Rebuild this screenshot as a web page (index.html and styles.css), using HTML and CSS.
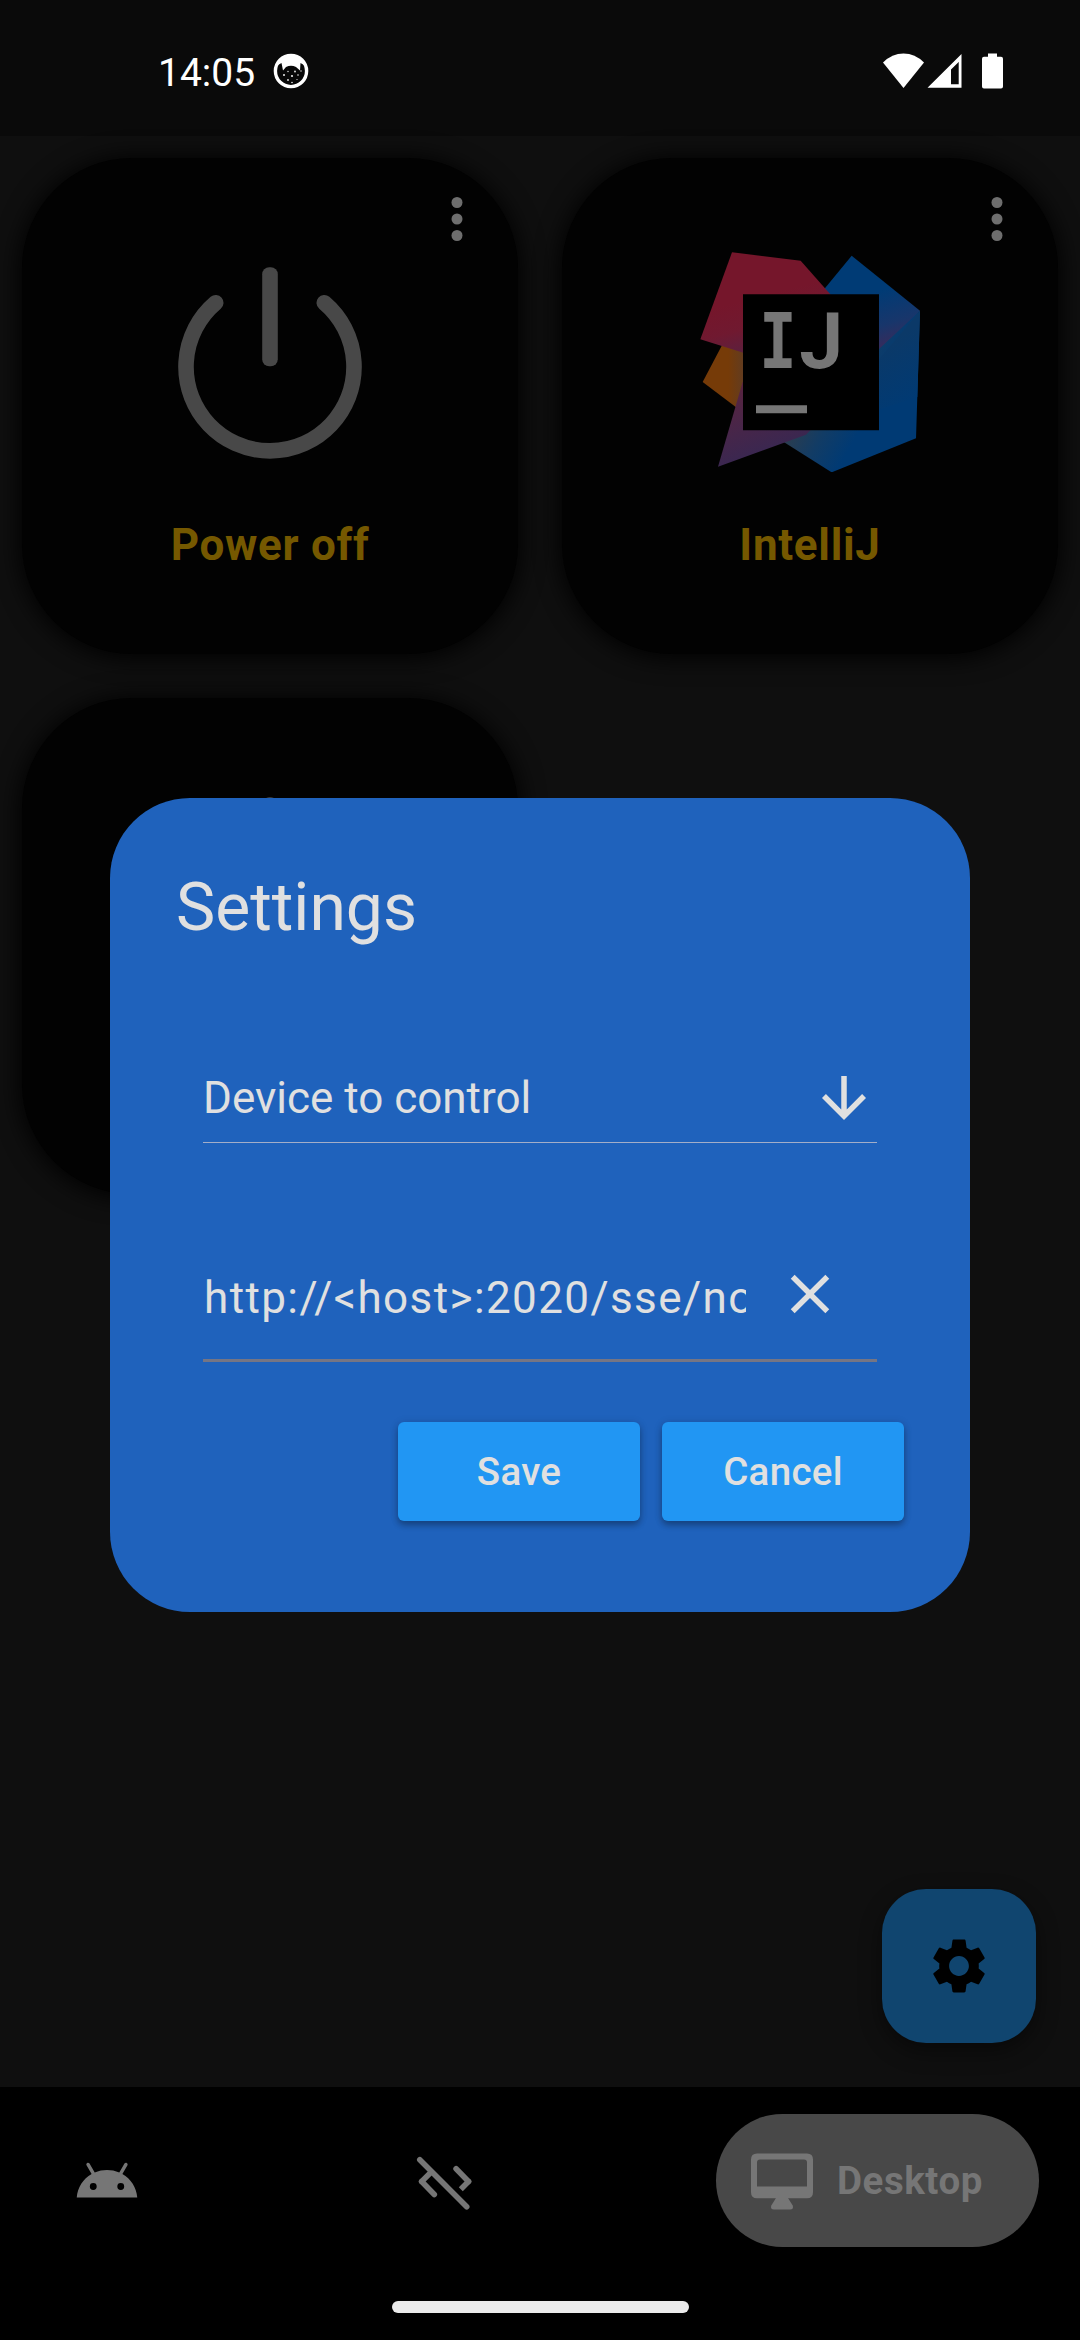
FILE: index.html
```html
<!DOCTYPE html>
<html lang="en">
<head>
<meta charset="utf-8">
<title>Remote control</title>
<link rel="stylesheet" href="styles.css">
</head>
<body>
<div class="screen">
  <header class="status">
    <div class="status-left">
      <span class="clock">14:05</span>
      <svg class="cat" viewBox="0 0 36 36"><circle cx="18" cy="18" r="15.6" fill="#080808" stroke="#fff" stroke-width="3.4"/><path d="M5 12Q8 2 18 1.500Q28 2 31 12L27.500 10L27 17.500L23 14Q18 11.500 13 14L10 17.500L8.500 10Z" fill="#fff"/><g fill="#eee"><circle cx="11" cy="22" r="1"/><circle cx="19" cy="23" r="1.100"/><circle cx="25" cy="22" r=".8"/><circle cx="15" cy="27" r=".9"/><circle cx="22" cy="18.500" r=".9"/><circle cx="15" cy="18.500" r=".7"/><circle cx="19" cy="29.500" r=".8"/><circle cx="24" cy="26.500" r=".6"/><circle cx="28" cy="18" r=".7"/></g></svg>
    </div>
    <svg class="radios" viewBox="882 52 124 38" fill="#fff"><path d="M903.500 88L883 62.500Q892 53.500 903.500 53.500T924 62.500Z"/><path fill-rule="evenodd" d="M961.500 54V87.700H927.500ZM958.700 62L951 69.500V84.300H958.700Z"/><path d="M988 53.500H997V56.700H1001Q1003 56.700 1003 58.700V86.400Q1003 88.400 1001 88.400H984Q982 88.400 982 86.400V58.700Q982 56.700 984 56.700H988Z"/></svg>
  </header>

  <main class="grid">
    <section class="card">
      <svg class="more" viewBox="0 0 24 24"><circle cx="12" cy="6" r="2"/><circle cx="12" cy="12" r="2"/><circle cx="12" cy="18" r="2"/></svg>
      <svg class="picture" viewBox="0 0 220 220"><path d="M105.700 50.800a84 84 0 1 0 108.600 0" transform="translate(-50)" fill="none" stroke="#484848" stroke-width="15.600" stroke-linecap="round"/><rect x="102.200" y="15.300" width="15.600" height="99" rx="7" fill="#484848"/></svg>
      <h2 class="label">Power off</h2>
    </section>
    <section class="card">
      <svg class="more" viewBox="0 0 24 24"><circle cx="12" cy="6" r="2"/><circle cx="12" cy="12" r="2"/><circle cx="12" cy="18" r="2"/></svg>
      <svg class="picture" viewBox="60 65 660 660">
        <defs>
          <linearGradient id="red" gradientUnits="userSpaceOnUse" x1="230" y1="200" x2="290" y2="430"><stop offset="0" stop-color="#75162b"/><stop offset=".35" stop-color="#701930"/><stop offset="1" stop-color="#422850"/></linearGradient>
          <linearGradient id="violet" gradientUnits="userSpaceOnUse" x1="180" y1="470" x2="250" y2="660"><stop offset="0" stop-color="#582440"/><stop offset="1" stop-color="#3b2750"/></linearGradient>
          <linearGradient id="orange" gradientUnits="userSpaceOnUse" x1="145" y1="0" x2="210" y2="0"><stop offset="0" stop-color="#763b08"/><stop offset="1" stop-color="#593c2a"/></linearGradient>
          <linearGradient id="sky" gradientUnits="userSpaceOnUse" x1="570" y1="190" x2="630" y2="385"><stop offset="0" stop-color="#003b75"/><stop offset=".5" stop-color="#18366b"/><stop offset="1" stop-color="#482553"/></linearGradient>
          <linearGradient id="blue" gradientUnits="userSpaceOnUse" x1="340" y1="580" x2="500" y2="670"><stop offset="0" stop-color="#2c3d4e"/><stop offset=".5" stop-color="#123c65"/><stop offset="1" stop-color="#003a74"/></linearGradient>
          <linearGradient id="edge" gradientUnits="userSpaceOnUse" x1="620" y1="340" x2="720" y2="510"><stop offset="0" stop-color="#0b3968"/><stop offset="1" stop-color="#003a74"/></linearGradient>
        </defs>
        <path d="M126 345L68 455L210 562V350Z" fill="url(#orange)"/>
        <path d="M515 76L720 241L580 410L420 192Z" fill="url(#sky)"/>
        <path d="M720 241L708 624L455 726L310 634L400 540Z" fill="url(#blue)"/>
        <path d="M720 241L712 500L590 540V395Z" fill="url(#edge)"/>
        <path d="M188 455L114 709L378 613L430 560Z" fill="url(#violet)"/>
        <path d="M156 66L362 91L480 225L300 402L61 327Z" fill="url(#red)"/>
        <path d="M189 192H597V600H189Z" fill="#000"/>
        <text class="logo-i" text-anchor="middle" transform="translate(294 414) scale(.82 1)">I</text>
        <text class="logo-j" x="358" y="414">J</text>
        <path d="M228 525H381V549H228Z" fill="#767676"/>
      </svg>
      <h2 class="label">IntelliJ</h2>
    </section>
    <section class="card">
      <svg class="picture picture-tall" viewBox="0 0 220 220"><rect x="103" y="5.200" width="14" height="70" rx="6" fill="#484848"/></svg>
    </section>
  </main>

  <div class="fab-row">
    <button class="fab"><svg viewBox="0 0 24 24"><path d="M19.140 12.940c.04-.3.06-.61.06-.94 0-.32-.02-.64-.07-.94l2.030-1.580c.18-.14.23-.41.12-.61l-1.920-3.320c-.12-.22-.37-.29-.59-.22l-2.390.96c-.5-.38-1.030-.7-1.620-.94l-.36-2.540c-.04-.24-.24-.41-.48-.41h-3.840c-.24 0-.43.17-.47.41l-.36 2.540c-.59.24-1.130.57-1.620.94l-2.390-.96c-.22-.08-.47 0-.59.22L2.740 8.870c-.12.21-.08.47.12.61l2.030 1.580c-.05.3-.09.63-.09.94s.02.64.07.94l-2.030 1.580c-.18.14-.23.41-.12.61l1.920 3.320c.12.22.37.29.59.22l2.390-.96c.5.38 1.030.7 1.620.94l.36 2.540c.05.24.24.41.48.41h3.840c.24 0 .44-.17.47-.41l.36-2.540c.59-.24 1.130-.56 1.620-.94l2.390.96c.22.08.47 0 .59-.22l1.920-3.320c.12-.22.07-.47-.12-.61l-2.010-1.580zM12 15.600c-1.980 0-3.600-1.620-3.600-3.600s1.620-3.600 3.600-3.600 3.600 1.620 3.600 3.600-1.620 3.600-3.600 3.600z"/></svg></button>
  </div>

  <footer class="bottom">
    <nav class="nav">
      <svg class="nav-icon" viewBox="0 0 24 24"><path fill="#767676" d="M17.600 9.480l1.840-3.180c.16-.31.04-.69-.26-.85-.29-.15-.65-.06-.83.22l-1.880 3.240c-2.860-1.210-6.080-1.210-8.940 0L5.650 5.670c-.19-.29-.58-.38-.87-.2-.28.18-.37.54-.22.83L6.400 9.480C3.300 11.250 1.280 14.440 1 18h22c-.28-3.560-2.300-6.750-5.400-8.520zM7 15.250a1.250 1.250 0 1 1 0-2.500 1.250 1.250 0 0 1 0 2.500zM17 15.250a1.250 1.250 0 1 1 0-2.500 1.250 1.250 0 0 1 0 2.500z"/></svg>
      <svg class="nav-icon" viewBox="0 0 66 66" fill="none" stroke="#767676" stroke-width="5.600"><path stroke-linecap="round" d="M7.800 11.800L54.700 58.800"/><path stroke-linecap="round" d="M9.700 33.500L22.300 46.500"/><path stroke-linejoin="round" d="M18.200 25L9.700 33.500L10.500 34.300"/><path stroke-linecap="round" d="M44.100 20.800L56.500 33.500"/><path stroke-linejoin="round" d="M56 33L56.500 33.500L48.800 41.200"/></svg>
      <div class="pill">
        <svg class="nav-icon" viewBox="0 0 66 66" fill="#767676"><path fill-rule="evenodd" d="M8 5.500H58Q64 5.500 64 11.500V44.200Q64 50.200 58 50.200H8Q2 50.200 2 44.200V11.500Q2 5.500 8 5.500ZM11 11.500Q8 11.500 8 14.500V38.500H58V14.500Q58 11.500 55 11.500Z"/><path d="M27 50H39L43.700 57.500Q45 61.500 41 61.500H25Q21 61.500 22.300 57.500Z"/></svg>
        <span>Desktop</span>
      </div>
    </nav>
    <div class="handle"></div>
  </footer>
</div>

<div class="overlay">
  <form class="dialog">
    <h1>Settings</h1>
    <div class="field device">
      <span>Device to control</span>
      <svg class="icon" viewBox="0 0 24 24"><path d="M20 12l-1.410-1.410L13 16.170V4h-2v12.170l-5.580-5.590L4 12l8 8 8-8z"/></svg>
    </div>
    <div class="field address">
      <span class="url">http://&lt;host&gt;:2020/sse/notify</span>
      <svg class="icon" viewBox="0 0 24 24"><path d="M19 6.410L17.590 5 12 10.590 6.410 5 5 6.410 10.590 12 5 17.590 6.410 19 12 13.410 17.590 19 19 17.590 13.410 12z"/></svg>
    </div>
    <div class="actions">
      <button type="button">Save</button>
      <button type="button">Cancel</button>
    </div>
  </form>
</div>
</body>
</html>
```

FILE: styles.css
```css
* { box-sizing: border-box; margin: 0; }
body { width: 1080px; height: 2340px; overflow: hidden; position: relative; background: #0f0f0f; font-family: Roboto, "Liberation Sans", sans-serif; }
svg { display: block; flex: none; }
button { border: 0; font-family: inherit; padding: 0; }

.screen { height: 2340px; display: flex; flex-direction: column; }
.status { height: 136px; background: #0a0a0a; display: flex; align-items: center; justify-content: space-between; padding: 6px 74px 0 158px; }
.status-left { display: flex; align-items: center; gap: 18px; }
.clock { color: #fff; font-size: 39px; line-height: 46px; margin-top: 3px; }
.cat { width: 36px; height: 36px; }
.radios { width: 124px; height: 38px; }

.grid { display: grid; grid-template-columns: 496px 496px; grid-auto-rows: 496px; gap: 44px; padding: 22px; }
.card { background: #020202; border-radius: 110px; box-shadow: 0 2px 24px 2px #000; display: grid; grid-template-rows: 94px 220px 1fr; justify-items: center; }
.more { width: 66px; height: 66px; fill: #6e6e6e; justify-self: end; margin: 28px 28px 0 0; }
.picture { width: 220px; height: 220px; }
.picture-tall { grid-row: 2; }
.card .label { color: #755800; font-size: 44px; line-height: 52px; font-weight: 700; letter-spacing: .7px; margin-top: 47px; }
.logo-i { font: 700 230px "DejaVu Sans Mono", monospace; fill: #767676; }
.logo-j { font: 700 236px Roboto, sans-serif; fill: #767676; }

.fab-row { margin-top: auto; display: flex; justify-content: flex-end; padding: 0 44px 44px; }
.fab { width: 154px; height: 154px; border-radius: 44px; background: #10456f; box-shadow: 0 8px 22px rgba(0,0,0,.45); display: grid; place-items: center; }
.fab svg { width: 66px; height: 66px; }

.bottom { height: 253px; background: #000; display: flex; flex-direction: column; align-items: center; padding-top: 27px; }
.nav { width: 100%; height: 133px; display: flex; align-items: center; padding: 0 41px 0 74px; gap: 272px; }
.nav-icon { width: 66px; height: 66px; }
.pill { width: 323px; height: 133px; border-radius: 67px; background: #484848; color: #767676; display: flex; align-items: center; gap: 22px; padding-left: 33px; margin-left: -34px; font-size: 38.5px; font-weight: 700; letter-spacing: .55px; }
.handle { width: 297px; height: 12px; border-radius: 6px; background: #ebebeb; margin-top: 54px; }

.overlay { position: absolute; inset: 0; padding-top: 798px; display: flex; justify-content: center; align-items: flex-start; }
.dialog { width: 860px; height: 814px; border-radius: 80px; background: #1f62bc; color: #e0e0e0; padding: 70px 66px 0; }
.dialog h1 { font-size: 66px; line-height: 80px; font-weight: 400; }
.field { margin: 0 27px; font-size: 44px; line-height: 52px; display: flex; align-items: center; justify-content: space-between; white-space: nowrap; }
.icon { width: 66px; height: 66px; fill: #e0e0e0; }
.device { height: 89px; margin-top: 106px; border-bottom: 1px solid #a3aec8; }
.address { height: 125px; margin-top: 94px; border-bottom: 3px solid #757584; justify-content: flex-start; letter-spacing: 1.4px; }
.url { width: 543px; overflow: hidden; padding-left: 1px; }
.address .icon { margin: 0 0 8px 31px; }
.actions { display: flex; justify-content: flex-end; gap: 22px; margin-top: 60px; }
.actions button { width: 242px; height: 99px; border-radius: 6px; background: #2196f3; color: #e0e0e0; font-size: 38.5px; font-weight: 500; letter-spacing: .3px; box-shadow: 0 4px 6px rgba(0,0,0,.28), 0 1px 10px rgba(0,0,0,.12); }
```
